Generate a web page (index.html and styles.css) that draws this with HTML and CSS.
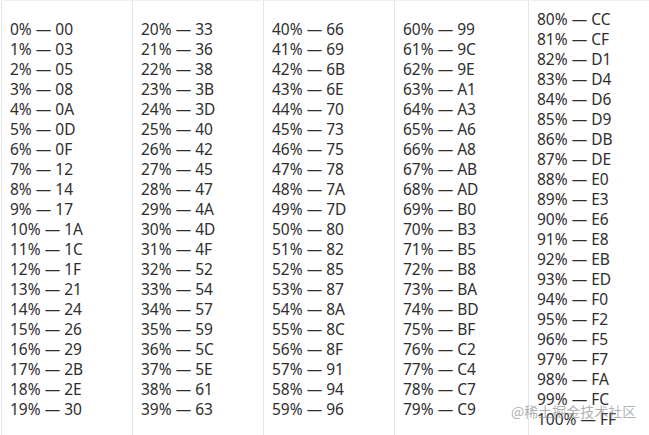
FILE: index.html
```html
<!DOCTYPE html>
<html>
<head>
<meta charset="utf-8">
<link rel="stylesheet" href="styles.css">
</head>
<body>
<div class="table">
  <div class="col c1" id="c1"></div>
  <div class="col c2" id="c2"></div>
  <div class="col c3" id="c3"></div>
  <div class="col c4" id="c4"></div>
  <div class="col c5" id="c5"></div>
</div>
<div class="watermark">@稀土掘金技术社区</div>
<script src="script.js"></script>
</body>
</html>
```
FILE: script.js
```js
var ranges = [[0,19,'c1'],[20,39,'c2'],[40,59,'c3'],[60,79,'c4'],[80,100,'c5']];
ranges.forEach(function (r) {
  var col = document.getElementById(r[2]);
  var inner = document.createElement('div');
  inner.className = 'list';
  for (var i = r[0]; i <= r[1]; i++) {
    var hex = Math.round(i * 255 / 100).toString(16).toUpperCase();
    if (hex.length < 2) hex = '0' + hex;
    var row = document.createElement('div');
    row.className = 'row';
    row.textContent = i + '% — ' + hex;
    inner.appendChild(row);
  }
  col.appendChild(inner);
});
```
FILE: styles.css
```css
html, body {
  margin: 0;
  padding: 0;
  background: #ffffff;
}
body {
  width: 649px;
  height: 435px;
  overflow: hidden;
  position: relative;
  font-family: "Noto Sans", "Open Sans", sans-serif;
  font-size: 15.5px;
  color: #2e2e2e;
}
.table {
  display: flex;
  height: 435px;
  margin-left: 1px;
  border-top: 1px solid #f0f0f0;
  box-sizing: border-box;
}
.col {
  display: flex;
  align-items: center;
  border-left: 1px solid #e6e6e6;
  box-sizing: border-box;
  padding-left: 8px;
  padding-top: 2px;
  height: 100%;
}
.c1 { width: 131px; }
.c2 { width: 131px; }
.c3 { width: 131px; }
.c4 { width: 134px; }
.c5 { width: 121px; }
.row {
  height: 20px;
  line-height: 20px;
  white-space: nowrap;
}
.watermark {
  position: absolute;
  left: 511px;
  top: 401px;
  font-family: "Noto Sans CJK SC", sans-serif;
  font-size: 14px;
  color: rgba(150, 150, 150, 0.75);
  white-space: nowrap;
}
```
